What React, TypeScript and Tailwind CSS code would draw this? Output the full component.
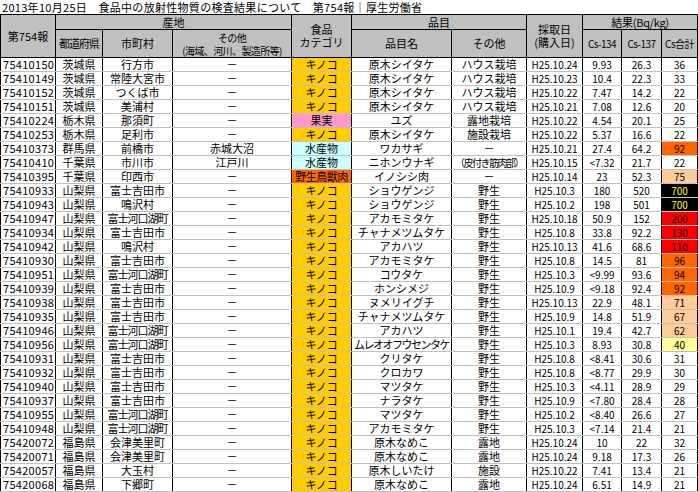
import React from "react";

type R = [string, string, string, string, string, string, string, string, string, string, string];
const rows: R[] = [
  ["75410150","茨城県","行方市","－","キノコ","原木シイタケ","ハウス栽培","H25.10.24","9.93","26.3","36"],
  ["75410149","茨城県","常陸大宮市","－","キノコ","原木シイタケ","ハウス栽培","H25.10.23","10.4","22.3","33"],
  ["75410152","茨城県","つくば市","－","キノコ","原木シイタケ","ハウス栽培","H25.10.22","7.47","14.2","22"],
  ["75410151","茨城県","美浦村","－","キノコ","原木シイタケ","ハウス栽培","H25.10.21","7.08","12.6","20"],
  ["75410224","栃木県","那須町","－","果実","ユズ","露地栽培","H25.10.22","4.54","20.1","25"],
  ["75410253","栃木県","足利市","－","キノコ","原木シイタケ","施設栽培","H25.10.22","5.37","16.6","22"],
  ["75410373","群馬県","前橋市","赤城大沼","水産物","ワカサギ","－","H25.10.21","27.4","64.2","92"],
  ["75410410","千葉県","市川市","江戸川","水産物","ニホンウナギ","（皮付き筋肉部）","H25.10.15","<7.32","21.7","22"],
  ["75410395","千葉県","印西市","－","野生鳥獣肉","イノシシ肉","－","H25.10.14","23","52.3","75"],
  ["75410933","山梨県","富士吉田市","－","キノコ","ショウゲンジ","野生","H25.10.3","180","520","700"],
  ["75410943","山梨県","鳴沢村","－","キノコ","ショウゲンジ","野生","H25.10.2","198","501","700"],
  ["75410947","山梨県","富士河口湖町","－","キノコ","アカモミタケ","野生","H25.10.18","50.9","152","200"],
  ["75410934","山梨県","富士吉田市","－","キノコ","チャナメツムタケ","野生","H25.10.8","33.8","92.2","130"],
  ["75410942","山梨県","鳴沢村","－","キノコ","アカハツ","野生","H25.10.13","41.6","68.6","110"],
  ["75410930","山梨県","富士吉田市","－","キノコ","アカモミタケ","野生","H25.10.8","14.5","81","96"],
  ["75410951","山梨県","富士河口湖町","－","キノコ","コウタケ","野生","H25.10.3","<9.99","93.6","94"],
  ["75410939","山梨県","富士吉田市","－","キノコ","ホンシメジ","野生","H25.10.9","<9.18","92.4","92"],
  ["75410938","山梨県","富士吉田市","－","キノコ","ヌメリイグチ","野生","H25.10.13","22.9","48.1","71"],
  ["75410935","山梨県","富士吉田市","－","キノコ","チャナメツムタケ","野生","H25.10.9","14.8","51.9","67"],
  ["75410946","山梨県","富士河口湖町","－","キノコ","アカハツ","野生","H25.10.1","19.4","42.7","62"],
  ["75410956","山梨県","富士河口湖町","－","キノコ","ムレオオフウセンタケ","野生","H25.10.3","8.93","30.8","40"],
  ["75410931","山梨県","富士吉田市","－","キノコ","クリタケ","野生","H25.10.8","<8.41","30.6","31"],
  ["75410932","山梨県","富士吉田市","－","キノコ","クロカワ","野生","H25.10.8","<8.77","29.9","30"],
  ["75410940","山梨県","富士吉田市","－","キノコ","マツタケ","野生","H25.10.3","<4.11","28.9","29"],
  ["75410937","山梨県","富士吉田市","－","キノコ","ナラタケ","野生","H25.10.9","<7.80","28.4","28"],
  ["75410955","山梨県","富士河口湖町","－","キノコ","マツタケ","野生","H25.10.2","<8.40","26.6","27"],
  ["75410948","山梨県","富士河口湖町","－","キノコ","アカモミタケ","野生","H25.10.3","<7.14","21.4","21"],
  ["75420072","福島県","会津美里町","－","キノコ","原木なめこ","露地","H25.10.24","10","22","32"],
  ["75420071","福島県","会津美里町","－","キノコ","原木なめこ","露地","H25.10.24","9.18","17.3","26"],
  ["75420057","福島県","大玉村","－","キノコ","原木しいたけ","施設","H25.10.22","7.41","13.4","21"],
  ["75420068","福島県","下郷町","－","キノコ","原木なめこ","露地","H25.10.24","6.51","14.9","21"],
];

const catCls: Record<string, string> = {
  "キノコ": "bg-[#ffcc00]",
  "果実": "bg-[#ff99cc]",
  "水産物": "bg-[#ccffff]",
  "野生鳥獣肉": "bg-[#ff6600]",
};

function totCls(v: number) {
  if (v >= 500) return "bg-black text-[#ffff00]";
  if (v >= 100) return "bg-[#ff0000]";
  if (v >= 80) return "bg-[#ff6600]";
  if (v >= 50) return "bg-[#ffcc99]";
  if (v >= 40) return "bg-[#ffff99]";
  return "bg-white";
}

const widths = [55, 47, 70, 119, 60, 100, 75, 56, 39, 40, 36];
const groupStarts = new Set([6, 9, 27]);

function Cell({ children, cls = "" }: { children: React.ReactNode; cls?: string }) {
  return <div className={"h-[13px] leading-[13px] overflow-hidden whitespace-nowrap " + cls}>{children}</div>;
}

export default function App() {
  const hd = "border border-black bg-[#c0c0c0] text-center font-normal p-0 leading-[13px] text-[11px]";
  return (
    <div className="w-[698px] h-[492px] bg-white text-black overflow-hidden text-[11px]" style={{ fontFamily: '"Noto Sans CJK JP", "DejaVu Sans", sans-serif' }}>
      <div className="h-[14px] leading-[14px] pl-[2px] whitespace-nowrap text-[11px] tracking-[0.3px]">2013年10月25日　食品中の放射性物質の検査結果について　第754報｜厚生労働省</div>
      <table className="table-fixed border-collapse w-[697px]">
        <colgroup>
          {widths.map((w, i) => <col key={i} style={{ width: w }} />)}
        </colgroup>
        <thead>
          <tr>
            <th rowSpan={2} className={hd}>第754報</th>
            <th colSpan={3} className={hd}><div className="h-[14px] leading-[14px]">産地</div></th>
            <th rowSpan={2} className={hd}>食品<br />カテゴリ</th>
            <th colSpan={2} className={hd}><div className="h-[14px] leading-[14px]">品目</div></th>
            <th rowSpan={2} className={hd}>採取日<br />(購入日)</th>
            <th colSpan={3} className={hd}><div className="h-[14px] leading-[14px] tracking-tight">結果(Bq/kg)</div></th>
          </tr>
          <tr>
            <th className={hd}><div className="h-[27px] leading-[27px] tracking-[-1px]">都道府県</div></th>
            <th className={hd}>市町村</th>
            <th className={hd}><div className="text-[10px] tracking-[-0.6px] leading-[13px]">その他<br />(海域、河川、製造所等)</div></th>
            <th className={hd}>品目名</th>
            <th className={hd}>その他</th>
            <th className={hd + " !text-[10px] tracking-[-0.5px]"}>Cs-134</th>
            <th className={hd + " !text-[10px] tracking-[-0.5px]"}>Cs-137</th>
            <th className={hd + " !text-[10px] tracking-[-0.5px]"}>Cs合計</th>
          </tr>
        </thead>
        <tbody>
          {rows.map((r, i) => {
            const top = groupStarts.has(i) ? "border-t-black" : "border-t-[#c0c0c0]";
            const c = `border-x border-x-black border-y border-b-[#c0c0c0] ${top} p-0 text-center`;
            const tot = parseFloat(r[10]);
            const wide = r[5].length > 8;
            return (
              <tr key={i}>
                <td className={c}><Cell cls="text-left pl-[2px] tracking-[0.3px]">{r[0]}</Cell></td>
                <td className={c}><Cell>{r[1]}</Cell></td>
                <td className={c}><Cell cls={r[2].length > 5 ? "tracking-[-1px]" : ""}>{r[2]}</Cell></td>
                <td className={c}><Cell>{r[3]}</Cell></td>
                <td className={c + " " + catCls[r[4]]}><Cell cls={r[4].length > 4 ? "tracking-[-0.5px]" : ""}>{r[4]}</Cell></td>
                <td className={c}><Cell cls={wide ? "tracking-[-1.5px]" : ""}>{r[5]}</Cell></td>
                <td className={c}><Cell cls={r[6].length > 6 ? "tracking-[-1.5px] text-[10px]" : ""}>{r[6]}</Cell></td>
                <td className={c}><Cell cls="text-[10px]">{r[7]}</Cell></td>
                <td className={c}><Cell cls="text-[10px]">{r[8]}</Cell></td>
                <td className={c}><Cell cls="text-[10px]">{r[9]}</Cell></td>
                <td className={c + " " + totCls(tot)}><Cell cls="text-[10px]">{r[10]}</Cell></td>
              </tr>
            );
          })}
        </tbody>
      </table>
    </div>
  );
}
